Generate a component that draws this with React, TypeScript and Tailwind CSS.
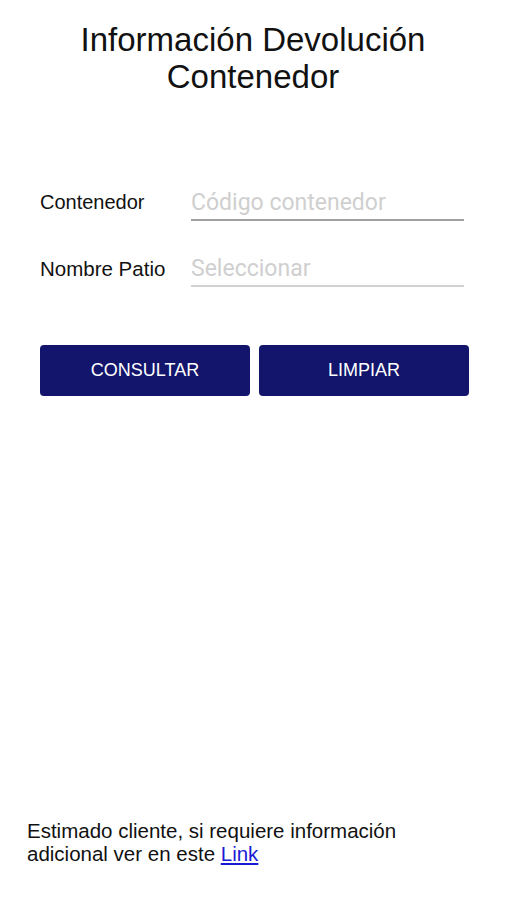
export default function App() {
  return (
    <div className="w-[506px] h-[900px] bg-white flex flex-col font-['Liberation_Sans',Arial,sans-serif] text-[#111]">
      <h1 className="mt-[21px] text-center text-[33px] leading-[37px] font-normal">
        Información Devolución
        <br />
        Contenedor
      </h1>

      <div className="mt-[86px] pl-[40px] pr-[42px] flex flex-col">
        <div className="flex items-end h-[40px]">
          <span className="w-[151px] text-[20px] leading-[23px] pb-[7px]">Contenedor</span>
          <div className="flex-1 h-[40px] border-b-2 border-[#a0a0a0] flex items-end pb-[2px]">
            <span className="font-['Roboto',sans-serif] text-[23px] leading-[28px] text-[#cfcfcf]">Código contenedor</span>
          </div>
        </div>
        <div className="flex items-end h-[40px] mt-[26px]">
          <span className="w-[151px] text-[20.5px] leading-[23px] pb-[7px]">Nombre Patio</span>
          <div className="flex-1 h-[40px] border-b-2 border-[#d2d2d2] flex items-end pb-[2px]">
            <span className="font-['Roboto',sans-serif] text-[23px] leading-[28px] text-[#cfcfcf]">Seleccionar</span>
          </div>
        </div>
      </div>

      <div className="mt-[58px] pl-[40px] pr-[37px] flex gap-[9px]">
        <button className="flex-1 h-[51px] rounded-[4px] bg-[#12156b] text-white text-[18px] uppercase">Consultar</button>
        <button className="flex-1 h-[51px] rounded-[4px] bg-[#12156b] text-white text-[18px] uppercase">Limpiar</button>
      </div>

      <div className="flex-1" />

      <p className="pl-[27px] pb-[35px] text-[20.5px] leading-[23px]">
        Estimado cliente, si requiere información
        <br />
        adicional ver en este <a className="text-[#1a1ad6] underline">Link</a>
      </p>
    </div>
  );
}
